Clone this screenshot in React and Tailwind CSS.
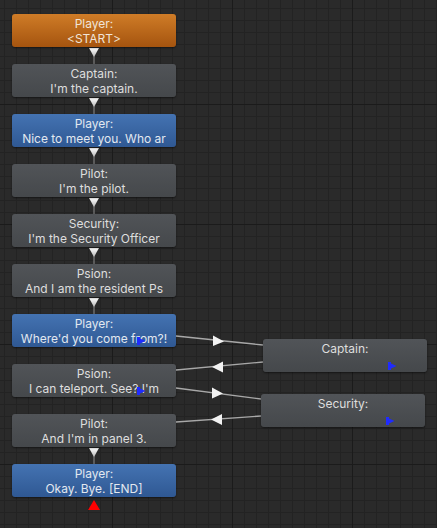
import React from 'react';

const tones = {
    orange: 'bg-[linear-gradient(to_bottom,#cf7c27,#a5540f)] text-[#f0e4d8]',
    gray: 'bg-[linear-gradient(to_bottom,#515458,#45484b)] text-[#dedede]',
    blue: 'bg-[linear-gradient(to_bottom,#4473b2,#2f5893)] text-[#e2e8f0]',
};

const dialogue = [
    { who: 'Player:', text: '<START>', tone: 'orange', next: true },
    { who: 'Captain:', text: "I'm the captain.", tone: 'gray', next: true },
    { who: 'Player:', text: 'Nice to meet you. Who ar', tone: 'blue', next: true },
    { who: 'Pilot:', text: "I'm the pilot.", tone: 'gray', next: true },
    { who: 'Security:', text: "I'm the Security Officer", tone: 'gray', next: true },
    { who: 'Psion:', text: 'And I am the resident Ps', tone: 'gray', next: true },
    { who: 'Player:', text: "Where'd you come from?!", tone: 'blue', marker: true },
    { who: 'Psion:', text: "I can teleport. See? I'm", tone: 'gray', marker: true },
    { who: 'Pilot:', text: "And I'm in panel 3.", tone: 'gray', next: true },
    { who: 'Player:', text: 'Okay. Bye. [END]', tone: 'blue', end: true },
];

function Marker({ className }) {
    return (
        <svg className={`absolute ${className}`} width="9" height="8" viewBox="0 0 9 8">
            <rect x="0" y="0" width="3" height="8" fill="#1f2bff" />
            <polygon points="3,1.5 8.5,4 3,6.5" fill="#1f2bff" />
        </svg>
    );
}

function Node({ who, text, tone, marker, className = '' }) {
    return (
        <div className={`relative w-[164px] h-[33px] rounded-[3px] shadow-[0_1px_2px_rgba(0,0,0,0.5)] pt-[2px] text-center text-[12px] leading-[15px] whitespace-nowrap overflow-hidden ${tones[tone]} ${className}`}>
            <div>{who}</div>
            <div>{text}</div>
            {marker && <Marker className="left-[125px] top-[23px]" />}
        </div>
    );
}

function Connector() {
    return (
        <div className="h-[17px] flex justify-center">
            <svg width="10" height="17" viewBox="0 0 10 17">
                <defs>
                    <linearGradient id="tri" x1="0" y1="0" x2="0" y2="1">
                        <stop offset="0" stopColor="#ffffff" />
                        <stop offset="1" stopColor="#b8b8b8" />
                    </linearGradient>
                </defs>
                <line x1="5" y1="8" x2="5" y2="17" stroke="#8c8c8c" strokeWidth="1" />
                <polygon points="0,1 10,1 5,10" fill="url(#tri)" />
            </svg>
        </div>
    );
}

export default function App() {
    return (
        <div
            className="relative w-[437px] h-[528px] overflow-hidden bg-[#2a2a2a] bg-[linear-gradient(to_right,#1b1b1b_1px,transparent_1px),linear-gradient(to_bottom,#1b1b1b_1px,transparent_1px),linear-gradient(to_right,#232323_1px,transparent_1px),linear-gradient(to_bottom,#232323_1px,transparent_1px)] bg-[size:120px_120px,120px_120px,12px_12px,12px_12px] bg-[position:112px_104px,112px_104px,4px_8px,4px_8px]"
            style={{ fontFamily: 'Inter, "Noto Sans", sans-serif' }}
        >
            {/* main chain */}
            <div className="flex flex-col pl-[12px] pt-[14px] w-[188px]">
                {dialogue.map((d, i) => (
                    <div key={i} className="flex flex-col w-[164px]">
                        <Node {...d} />
                        {d.next ? <Connector /> : !d.end && <div className="h-[17px]" />}
                        {d.end && (
                            <div className="flex justify-center pt-[3px]">
                                <svg width="12" height="10" viewBox="0 0 12 10">
                                    <polygon points="6,0 12,10 0,10" fill="#ff0000" />
                                </svg>
                            </div>
                        )}
                    </div>
                ))}
            </div>

            {/* branch links */}
            <svg className="absolute inset-0 pointer-events-none" width="437" height="528" viewBox="0 0 437 528">
                <g stroke="#a8a8a8" strokeWidth="1.3" fill="none">
                    <line x1="176" y1="336" x2="263" y2="345" />
                    <line x1="263" y1="362" x2="176" y2="370" />
                    <line x1="176" y1="388" x2="261" y2="399" />
                    <line x1="261" y1="416" x2="176" y2="422" />
                </g>
                <g fill="#f2f2f2">
                    <polygon points="213,335.5 213,346 224,341.5" />
                    <polygon points="223,361.5 223,372.5 212,367" />
                    <polygon points="212,387.5 212,398.5 223,393.5" />
                    <polygon points="222,414 222,425 211,419.5" />
                </g>
            </svg>

            <div className="absolute left-[263px] top-[339px]">
                <Node who="Captain:" text="" tone="gray" marker />
            </div>
            <div className="absolute left-[261px] top-[394px]">
                <Node who="Security:" text="" tone="gray" marker />
            </div>
        </div>
    );
}
